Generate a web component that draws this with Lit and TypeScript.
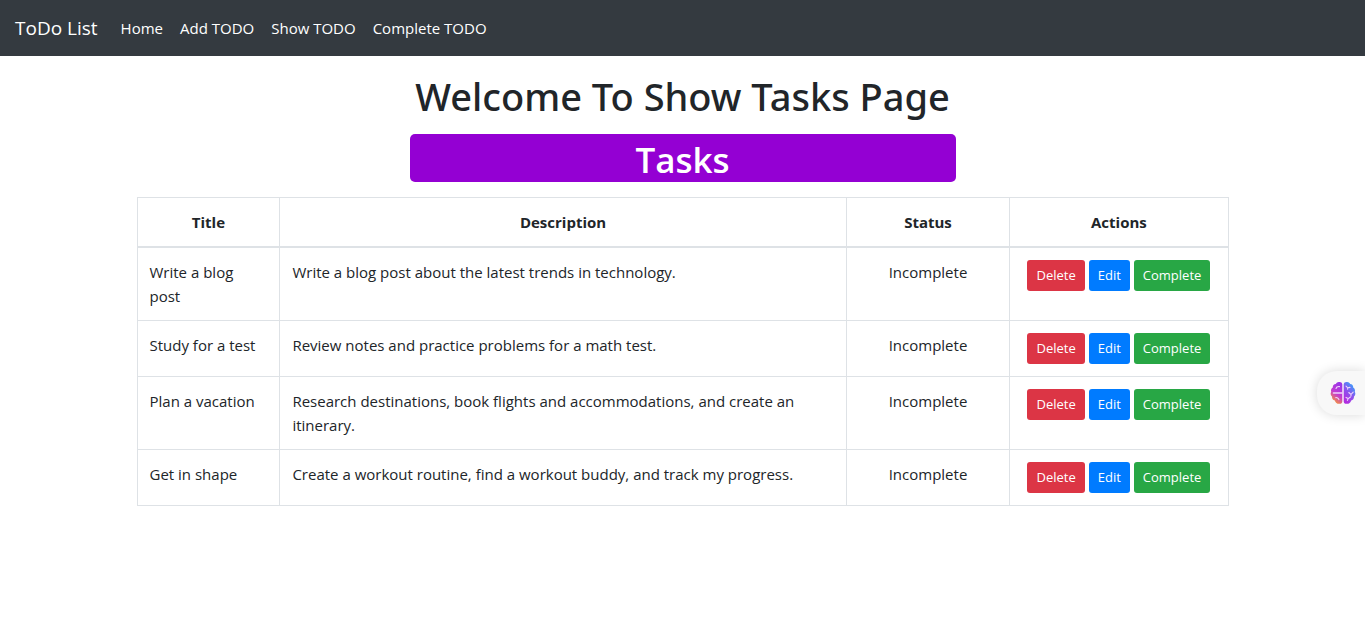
import { LitElement, html, css } from "lit";
import { customElement, state } from "lit/decorators.js";

interface Task {
  title: string;
  description: string;
  status: string;
}

@customElement("app-root")
export class AppRoot extends LitElement {
  static styles = css`
    :host {
      display: block;
      color: #212529;
      font-family: "Segoe UI", "Open Sans", "Noto Sans", sans-serif;
      font-size: 15px;
      line-height: 24px;
    }
    *,
    *::before,
    *::after {
      box-sizing: border-box;
    }
    .navbar {
      display: flex;
      align-items: center;
      height: 56px;
      padding: 0 15px;
      gap: 15px;
      background: #343a40;
    }
    a {
      color: #fff;
      text-decoration: none;
    }
    .brand {
      font-size: 19px;
      line-height: 30px;
    }
    .links {
      display: flex;
      gap: 1px;
      margin: 0;
      padding: 0;
      list-style: none;
    }
    .links a {
      display: block;
      padding: 8px;
    }
    main {
      width: 80%;
      margin: 0 auto;
      padding-top: 16px;
    }
    h1,
    h2 {
      margin: 0 auto;
      line-height: 48px;
      text-align: center;
    }
    h1 {
      font-family: "Segoe UI", "Noto Sans", sans-serif;
      font-size: 38px;
      font-weight: 500;
    }
    h2 {
      width: 50%;
      margin: 14px auto 15px;
      padding-top: 4px;
      border-radius: 5px;
      background: #9400d3;
      color: #fff;
      font-size: 35px;
      font-weight: 600;
      line-height: 44px;
    }
    table {
      width: 100%;
      table-layout: fixed;
      border-collapse: collapse;
      border: 1px solid #dee2e6;
    }
    th,
    td {
      padding: 12px;
      border: 1px solid #dee2e6;
      text-align: center;
      vertical-align: top;
    }
    th {
      border-bottom-width: 2px;
      font-weight: 700;
    }
    td.text {
      text-align: left;
    }
    .col-title {
      width: 13.1%;
    }
    .col-status {
      width: 15%;
    }
    .col-actions {
      width: 20%;
    }
    .actions {
      display: flex;
      justify-content: center;
      gap: 4px;
    }
    button {
      padding: 4px 8px;
      border: 1px solid transparent;
      border-radius: 3px;
      color: #fff;
      font-family: inherit;
      font-size: 13px;
      font-weight: 400;
      line-height: 21px;
      cursor: pointer;
    }
    .delete {
      background: #dc3545;
    }
    .edit {
      background: #007bff;
    }
    .complete {
      background: #28a745;
    }
    .assistant {
      position: fixed;
      top: 371px;
      right: 0;
      width: 48px;
      height: 44px;
      padding: 0 9px 0 12px;
      border-radius: 20px 0 0 20px;
      background: #f8f8f8;
      box-shadow: 0 0 12px rgba(0, 0, 0, 0.15);
    }
    .assistant svg {
      display: block;
      width: 26px;
      height: 24px;
    }
  `;

  @state() private tasks: Task[] = [
    {
      title: "Write a blog post",
      description: "Write a blog post about the latest trends in technology.",
      status: "Incomplete",
    },
    {
      title: "Study for a test",
      description: "Review notes and practice problems for a math test.",
      status: "Incomplete",
    },
    {
      title: "Plan a vacation",
      description:
        "Research destinations, book flights and accommodations, and create an itinerary.",
      status: "Incomplete",
    },
    {
      title: "Get in shape",
      description:
        "Create a workout routine, find a workout buddy, and track my progress.",
      status: "Incomplete",
    },
  ];

  render() {
    return html`
      <nav class="navbar">
        <a class="brand" href="#">ToDo List</a>
        <ul class="links">
          ${["Home", "Add TODO", "Show TODO", "Complete TODO"].map(
            (label) => html`<li><a href="#">${label}</a></li>`
          )}
        </ul>
      </nav>
      <main>
        <h1>Welcome To Show Tasks Page</h1>
        <h2>Tasks</h2>
        <table>
          <thead>
            <tr>
              <th class="col-title" scope="col">Title</th>
              <th scope="col">Description</th>
              <th class="col-status" scope="col">Status</th>
              <th class="col-actions" scope="col">Actions</th>
            </tr>
          </thead>
          <tbody>
            ${this.tasks.map(
              (task) => html`
                <tr>
                  <td class="text">${task.title}</td>
                  <td class="text">${task.description}</td>
                  <td>${task.status}</td>
                  <td>
                    <div class="actions">
                      <button type="button" class="delete">Delete</button>
                      <button type="button" class="edit">Edit</button>
                      <button type="button" class="complete">Complete</button>
                    </div>
                  </td>
                </tr>
              `
            )}
          </tbody>
        </table>
      </main>
      <button type="button" class="assistant" aria-label="Assistant">
        <svg viewBox="0 0 26 24" aria-hidden="true">
          <defs>
            <linearGradient id="left" x1="0.2" y1="1" x2="0.6" y2="0">
              <stop offset="0.1" stop-color="#f5923e" />
              <stop offset="0.5" stop-color="#c43bd0" />
              <stop offset="1" stop-color="#9a35e8" />
            </linearGradient>
            <linearGradient id="right" x1="0.2" y1="1" x2="0.8" y2="0">
              <stop offset="0.1" stop-color="#b02fe0" />
              <stop offset="0.5" stop-color="#8a55ee" />
              <stop offset="0.9" stop-color="#3f9dfa" />
            </linearGradient>
          </defs>
          <path
            fill="url(#left)"
            d="M12.3 3.2C12 1.4 10.6.8 9.2 1 7.8.8 6.4 1.6 5.8 3 3.9 3.1 2.6 4.6 2.8 6.5 1.2 7.5.6 9.1 1.2 10.8.2 12.4.6 14.4 2 15.4 1.9 17.6 3.1 19 4.8 19.4 5.6 21.9 7.4 23.1 9.4 22.8 11 23.1 12.2 22 12.3 20.4Z"
          />
          <path
            fill="url(#right)"
            d="M13.7 3.2C14 1.4 15.4.8 16.8 1 18.2.8 19.6 1.6 20.2 3 22.1 3.1 23.4 4.6 23.2 6.5 24.8 7.5 25.4 9.1 24.8 10.8 25.8 12.4 25.4 14.4 24 15.4 24.1 17.6 22.9 19 21.2 19.4 20.4 21.9 18.6 23.1 16.6 22.8 15 23.1 13.8 22 13.7 20.4Z"
          />
          <g
            fill="none"
            stroke="#f0d4fb"
            stroke-width="1.1"
            stroke-linecap="round"
            stroke-linejoin="round"
          >
            <path stroke-width="1.6" d="M3.5 12H12" />
            <path d="M6 7.5C6.4 6 7.6 5.4 9.5 5.6M5.8 16.6C6.8 16.4 8.6 17 8.9 18.7" />
            <path d="M16 5.2 17.8 6.8 17.6 8.2M17.8 6.8 20 6.4M18.8 11.5 21 13.4 23.2 11.2M21 13.4V15M16 16.4 18.2 17.6 20.4 16M18.2 17.6 17.4 19.4" />
          </g>
        </svg>
      </button>
    `;
  }
}
